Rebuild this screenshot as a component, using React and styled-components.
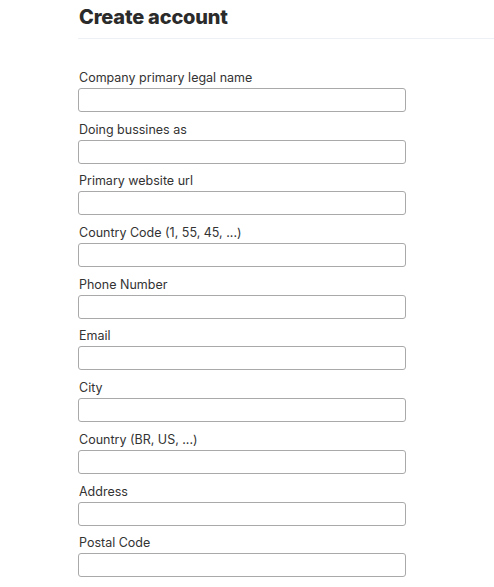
import React from 'react'
import styled, { createGlobalStyle } from 'styled-components';

const GlobalStyle = createGlobalStyle`
  * { box-sizing: border-box; }
  body {
    margin: 0;
    background: #fff;
    font-family: Inter, "Liberation Sans", sans-serif;
    color: #333;
  }
`;

const fields = [
    'Company primary legal name',
    'Doing bussines as',
    'Primary website url',
    'Country Code (1, 55, 45, ...)',
    'Phone Number',
    'Email',
    'City',
    'Country (BR, US, ...)',
    'Address',
    'Postal Code',
];

const App = () => {
    return (
        <>
            <GlobalStyle />
            <Page>
                <Header>
                    <h1>Create account</h1>
                </Header>
                <Form>
                    {fields.map((f) => (
                        <Field key={f}>
                            <label>{f}</label>
                            <input type='text' />
                        </Field>
                    ))}
                </Form>
            </Page>
        </>
    )
}

const Page = styled.main`
  padding-left: 78px;
  width: 100%;
`;

const Header = styled.header`
  border-bottom: 1px solid #edf1f5;
  padding: 5px 0 0 1px;
  height: 39px;
  h1 {
    margin: 0;
    font-family: Inter, "Liberation Sans", sans-serif;
    font-size: 20px;
    font-weight: 800;
    line-height: 24px;
    color: #2b2b2b;
    letter-spacing: -0.2px;
  }
`;

const Form = styled.form`
  width: 328px;
  padding-top: 29px;
  display: flex;
  flex-direction: column;
  gap: 7.7px;
`;

const Field = styled.div`
  display: flex;
  flex-direction: column;
  label {
    font-size: 12.5px;
    line-height: 19px;
    padding-left: 1px;
    margin-bottom: 1px;
    color: #333;
  }
  input {
    height: 24px;
    width: 100%;
    border: 1px solid #a9a9a9;
    border-radius: 3px;
    background: #fff;
    outline: none;
  }
`;

export default App
